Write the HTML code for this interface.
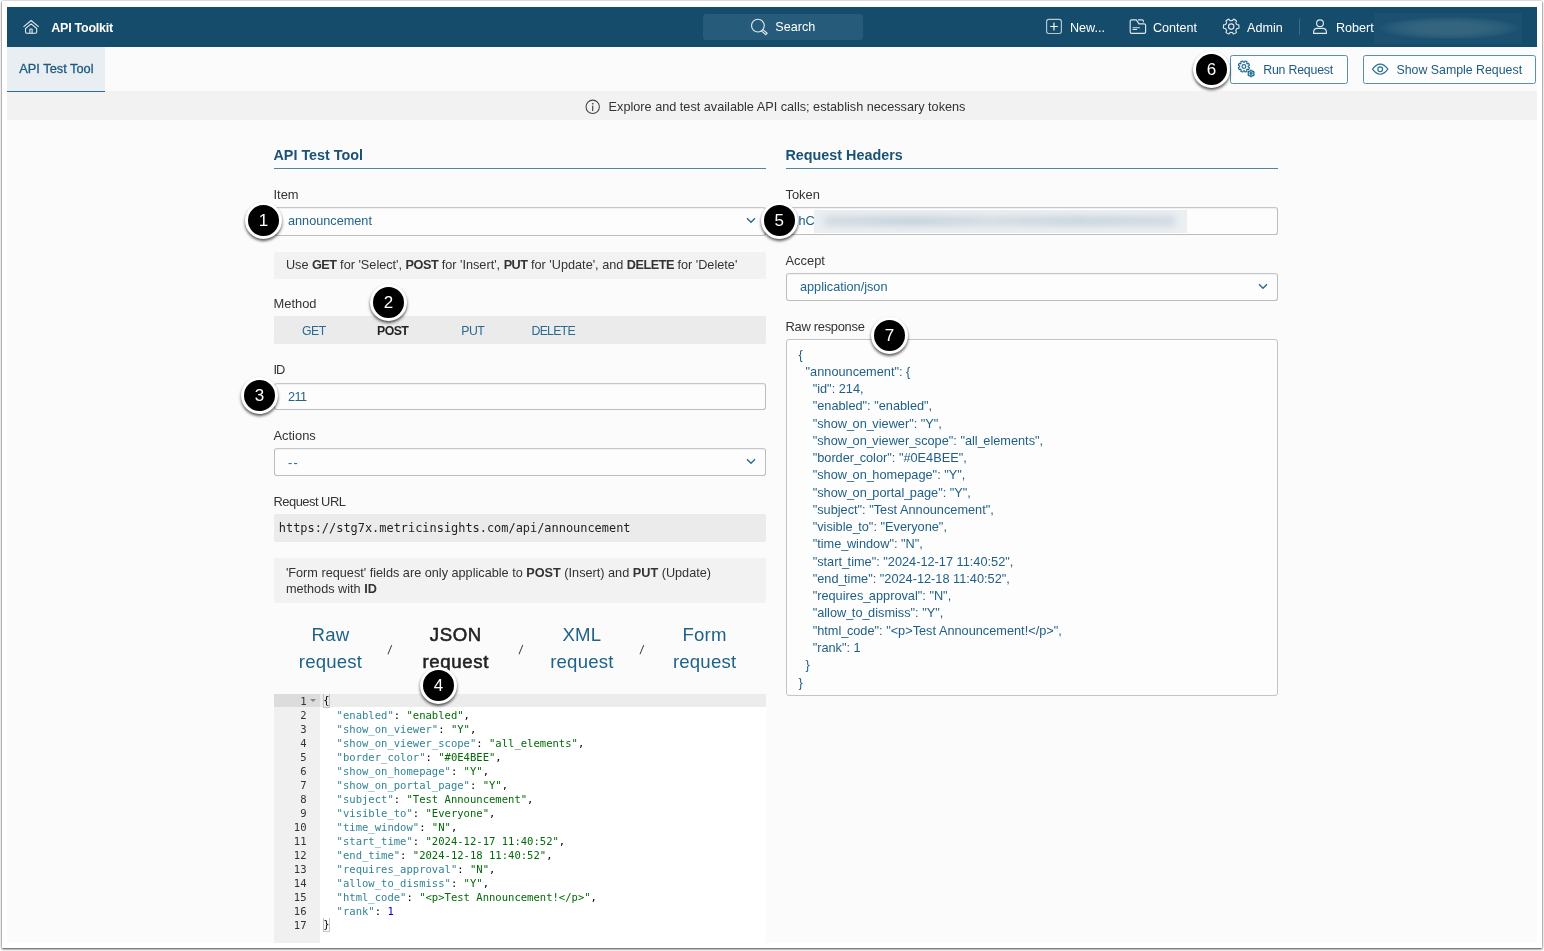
<!DOCTYPE html>
<html lang="en">
<head>
<meta charset="utf-8">
<title>API Toolkit</title>
<style>
*{box-sizing:border-box;margin:0;padding:0}
html,body{width:1544px;height:951px;overflow:hidden;background:#fff}
body{position:relative;font-family:"Liberation Sans",Arial,sans-serif;font-size:12.7px;color:#333}
.frame{position:absolute;left:2px;top:1px;width:1540px;height:947px;background:#fff;box-shadow:0 1px 2px rgba(0,0,0,.65),0 0 1px rgba(0,0,0,.4),0 1px 5px rgba(0,0,0,.12)}
.app{will-change:transform;position:absolute;left:7px;top:7px;width:1530px;height:936px;background:#fbfbfb;overflow:hidden}
.abs{position:absolute;white-space:nowrap}
.nav{position:absolute;left:0;top:0;width:1530px;height:40px;background:#154c6c;color:#fff}
.nav .t{position:absolute;top:0;height:40px;line-height:42px;font-size:12.6px;color:#fff;white-space:nowrap}
.search{position:absolute;left:696px;top:7px;width:160px;height:26px;background:#265b79;border-radius:3px}
.blur{position:absolute;left:1367px;top:6px;width:148px;height:31px;background:radial-gradient(ellipse 49% 37% at 51% 49%,#35667f 0%,#32647e 50%,#285b78 80%,rgba(27,80,112,0) 100%),#1b5070}
.tabbar{position:absolute;left:0;top:40px;width:1530px;height:44px;background:#fbfbfb}
.tab{position:absolute;left:0;top:0;width:98.4px;height:45px;z-index:2;background:#e9eef3;border-bottom:1.3px solid #2c6e91;color:#1d5a80;line-height:44.2px;padding-left:12.3px;font-size:12.8px;-webkit-text-stroke:.3px #1d5a80}
.btn{position:absolute;top:8px;height:29px;border:1.2px solid #5790ae;border-radius:2.5px;background:#fdfdfd;color:#1d5a80;font-size:12.35px;line-height:28.5px;white-space:nowrap}
.strip{position:absolute;left:0;top:84px;width:1530px;height:29px;background:#f2f2f2;color:#333;font-size:12.7px;line-height:32.6px}
.h{position:absolute;font-weight:bold;font-size:14.35px;color:#1a5276;white-space:nowrap}
.hr{position:absolute;height:1px;background:#4d86a5;width:492px}
.lbl{position:absolute;font-size:12.9px;color:#333;white-space:nowrap;line-height:16px}
.inp{position:absolute;width:492px;height:27px;border:1px solid #bcbcbc;border-top-color:#c6c6c6;border-radius:3px;background:#fdfdfd;box-shadow:inset 0 1px 0 rgba(0,0,0,.05);color:#22648a;font-size:12.7px;line-height:26px;padding-left:13.5px;white-space:nowrap}
.note{position:absolute;width:492px;background:#f2f2f2;color:#333;font-size:12.7px;padding-left:12.4px;border-radius:2px}
.note.n1 b{letter-spacing:-.5px}
.bar{position:absolute;width:492px;height:28px;background:#ebebeb;border-radius:2px}
.chev{position:absolute;right:9px;top:9px;width:10px;height:7px}
.mk{position:absolute;width:37px;height:37px;border-radius:50%;background:#000;border:3px solid #fff;box-shadow:0 2px 3px rgba(0,0,0,.65);color:#fff;font-size:17px;line-height:31px;text-align:center;z-index:10}

.m{top:0;line-height:30px;font-size:12.3px;letter-spacing:-.55px;color:#2a6a90}
.url{font-family:"DejaVu Sans Mono","Liberation Mono",monospace;font-size:11.93px;line-height:29px;color:#222;padding-left:5.3px;white-space:nowrap}
.rt{position:absolute;top:615.4px;font-size:18.6px;letter-spacing:.2px;line-height:26.4px;color:#1f6289;text-align:center;white-space:nowrap}
.rt.on{color:#222;-webkit-text-stroke:.55px #222;letter-spacing:.65px}
.sl{position:absolute;top:635.5px;font-size:12.5px;color:#333;transform:skewX(-8deg)}
.ta{position:absolute;width:492px;height:357px;border:1px solid #c4c4c4;border-radius:3px;background:#fdfdfd;padding:5.5px 0 0 12px}
.ta pre i{font-style:normal;letter-spacing:-1.5px}
.ta pre{font-family:"Liberation Sans",Arial,sans-serif;font-size:12.75px;line-height:17.265px;color:#1f5f85;tab-size:2}
.tokblur{position:absolute;left:27.5px;top:1.3px;width:373px;height:23px;background:#ebeff2;overflow:hidden;filter:blur(.7px)}
.tokblur:after{content:"";position:absolute;left:10px;right:12px;top:6.5px;height:10px;background:linear-gradient(90deg,#d2dbe2,#c6d1da 25%,#d3dce3 48%,#c9d4dc 72%,#d0dae1);filter:blur(3.5px)}

.ace{position:absolute;width:492px;height:249px;background:#fff;font-family:"DejaVu Sans Mono","Liberation Mono",monospace;font-size:10.55px;line-height:14px;overflow:hidden}
.gut{position:absolute;left:0;top:0;width:46px;height:249px;background:#f0f0f0;color:#333}
.gl{height:14px;text-align:right;padding-right:13px}
.gl.act{background:linear-gradient(#dcdcdc 0,#dcdcdc 13px,#f0f0f0 13px)}
.fold{position:absolute;left:36px;top:5px;width:0;height:0;border-left:3px solid transparent;border-right:3px solid transparent;border-top:3.5px solid #888}
.code{position:absolute;left:46px;top:0;width:446px;height:249px;color:#000}
.cl{height:14px;padding-left:4.4px;white-space:pre}
.cl.act{background:linear-gradient(#ececec 0,#ececec 13px,#fff 13px)}
.k{color:#318495}.s{color:#036a07}.n{color:#0000cd}
.br{display:inline-block;width:7.7px;height:13.5px;margin-left:-1.4px;border:1px solid #c4c4c4;border-top:0;vertical-align:top;line-height:13.5px;box-sizing:border-box;text-indent:-.3px}
.ov{position:absolute;left:-7px;top:-7px;z-index:5;pointer-events:none}
</style>
</head>
<body>
<div class="frame"></div>
<div class="app">

  <svg class="ov" viewBox="0 0 1544 951" width="1544" height="951" fill="none" stroke-linecap="round" stroke-linejoin="round">
    <!-- home -->
    <g stroke="#dde7ed" stroke-width="1.1">
      <path d="M23.5 26.9 L31.1 20.5 L38.7 26.9" stroke-linecap="butt"/>
      <path d="M25.5 28.5 L31.1 23.8 L36.7 28.5 V31.8 a1.5 1.5 0 0 1 -1.5 1.5 H27 a1.5 1.5 0 0 1 -1.5 -1.5 Z"/>
      <path d="M29.9 33.2 V29 H32.1 V33.2"/>
    </g>
    <!-- search -->
    <g stroke="#dde7ed" stroke-width="1.15">
      <circle cx="757.9" cy="25.6" r="6.4"/>
      <path d="M762.6 29.4 L767.2 33.2 L765.9 34.7 L761.3 30.9"/>
    </g>
    <!-- plus -->
    <g stroke="#dde7ed" stroke-width="1.15">
      <rect x="1046.6" y="19.3" width="14.8" height="14.2" rx="2.2" stroke="#b7c8d3"/>
      <path d="M1050.6 26.5 H1057.4 M1054 23.1 V29.9" stroke="#fff"/>
    </g>
    <!-- folder -->
    <g stroke="#dde7ed" stroke-width="1.15">
      <path d="M1131.6 19.9 H1136.3 L1139 23.9 H1144.2 a1.4 1.4 0 0 1 1.4 1.4 V31.9 a1.4 1.4 0 0 1 -1.4 1.4 H1131.6 a1.4 1.4 0 0 1 -1.4 -1.4 V21.3 a1.4 1.4 0 0 1 1.4 -1.4 Z"/>
      <path d="M1138.4 19.8 H1142 q1.4 0 1.5 1.9"/>
      <path d="M1133 27.7 H1139.4 M1133 29.5 H1136.6"/>
    </g>
    <!-- gear admin -->
    <g stroke="#dde7ed" stroke-width="1.15" ><path d="M1236.48 32.34 A7.80 7.80 0 0 1 1233.53 34.04 L1232.18 32.42 A5.90 5.90 0 0 1 1230.22 32.42 L1228.87 34.04 A7.80 7.80 0 0 1 1225.92 32.34 L1226.65 30.36 A5.90 5.90 0 0 1 1225.67 28.66 L1223.59 28.30 A7.80 7.80 0 0 1 1223.59 24.90 L1225.67 24.54 A5.90 5.90 0 0 1 1226.65 22.84 L1225.92 20.86 A7.80 7.80 0 0 1 1228.87 19.16 L1230.22 20.78 A5.90 5.90 0 0 1 1232.18 20.78 L1233.53 19.16 A7.80 7.80 0 0 1 1236.48 20.86 L1235.75 22.84 A5.90 5.90 0 0 1 1236.73 24.54 L1238.81 24.90 A7.80 7.80 0 0 1 1238.81 28.30 L1236.73 28.66 A5.90 5.90 0 0 1 1235.75 30.36 Z"/><circle cx="1231.2" cy="26.6" r="2.7"/></g>
    <!-- separator -->
    <path d="M1299.5 19 V34.6" stroke="#3f6d88" stroke-width="1"/>
    <!-- user -->
    <g stroke="#dde7ed" stroke-width="1.15">
      <circle cx="1320" cy="23.2" r="3.4"/>
      <path d="M1313.6 33.4 V32.2 q0 -3.8 3.8 -3.8 H1322.6 q3.8 0 3.8 3.8 V33.4 Z"/>
    </g>
    <!-- run gears -->
    <g stroke="#1f6a90" stroke-width="1.15" ><path d="M1249.39 67.59 A5.60 5.60 0 0 1 1248.56 69.61 L1247.25 69.20 A4.30 4.30 0 0 1 1246.60 69.85 L1247.01 71.16 A5.60 5.60 0 0 1 1244.99 71.99 L1244.36 70.77 A4.30 4.30 0 0 1 1243.44 70.77 L1242.81 71.99 A5.60 5.60 0 0 1 1240.79 71.16 L1241.20 69.85 A4.30 4.30 0 0 1 1240.55 69.20 L1239.24 69.61 A5.60 5.60 0 0 1 1238.41 67.59 L1239.63 66.96 A4.30 4.30 0 0 1 1239.63 66.04 L1238.41 65.41 A5.60 5.60 0 0 1 1239.24 63.39 L1240.55 63.80 A4.30 4.30 0 0 1 1241.20 63.15 L1240.79 61.84 A5.60 5.60 0 0 1 1242.81 61.01 L1243.44 62.23 A4.30 4.30 0 0 1 1244.36 62.23 L1244.99 61.01 A5.60 5.60 0 0 1 1247.01 61.84 L1246.60 63.15 A4.30 4.30 0 0 1 1247.25 63.80 L1248.56 63.39 A5.60 5.60 0 0 1 1249.39 65.41 L1248.17 66.04 A4.30 4.30 0 0 1 1248.17 66.96 Z"/><circle cx="1243.9" cy="66.5" r="1.9"/><path d="M1254.19 74.33 A3.20 3.20 0 0 1 1253.36 75.76 L1252.52 75.31 A2.30 2.30 0 0 1 1251.95 75.64 L1251.93 76.59 A3.20 3.20 0 0 1 1250.27 76.59 L1250.25 75.64 A2.30 2.30 0 0 1 1249.68 75.31 L1248.84 75.76 A3.20 3.20 0 0 1 1248.01 74.33 L1248.82 73.83 A2.30 2.30 0 0 1 1248.82 73.17 L1248.01 72.67 A3.20 3.20 0 0 1 1248.84 71.24 L1249.68 71.69 A2.30 2.30 0 0 1 1250.25 71.36 L1250.27 70.41 A3.20 3.20 0 0 1 1251.93 70.41 L1251.95 71.36 A2.30 2.30 0 0 1 1252.52 71.69 L1253.36 71.24 A3.20 3.20 0 0 1 1254.19 72.67 L1253.38 73.17 A2.30 2.30 0 0 1 1253.38 73.83 Z"/><circle cx="1251.1" cy="73.5" r=".9"/></g>
    <!-- eye -->
    <g stroke="#2a6e92" stroke-width="1.15">
      <path d="M1372.5 69.2 Q1376.2 64.2 1380.2 64.2 Q1384.2 64.2 1387.9 69.2 Q1384.2 74.2 1380.2 74.2 Q1376.2 74.2 1372.5 69.2 Z"/>
      <circle cx="1380.2" cy="69.3" r="2.4"/>
    </g>
    <!-- info -->
    <g stroke="#444" stroke-width="1.05">
      <circle cx="592.7" cy="106.8" r="6.7"/>
      <path d="M592.7 106 V110.6" stroke-width="1.2"/>
      <circle cx="592.7" cy="103.8" r=".35" fill="#444" stroke-width=".8"/>
    </g>
  </svg>
  <div class="nav">
    <div class="t" style="left:44.3px;font-weight:bold;font-size:12.5px;letter-spacing:-.25px">API Toolkit</div>
    <div class="search"></div>
    <div class="t" style="left:768.3px;top:-.9px">Search</div>
    <div class="t" style="left:1063px">New...</div>
    <div class="t" style="left:1146px">Content</div>
    <div class="t" style="left:1240px">Admin</div>
    <div class="t" style="left:1329px">Robert</div>
    <div class="blur"></div>
  </div>
  <div class="tabbar">
    <div class="tab">API Test Tool</div>
    <div class="btn" style="left:1223px;width:118px;padding-left:32.2px;letter-spacing:-.2px">Run Request</div>
    <div class="btn" style="left:1356px;width:173px;padding-left:32.5px">Show Sample Request</div>
  </div>
  <div class="strip"><span class="abs" style="left:601.6px">Explore and test available API calls; establish necessary tokens</span></div>

  <!-- LEFT COLUMN -->
  <div class="h" id="h1" style="left:266.5px;top:139.7px">API Test Tool</div>
  <div class="hr" style="left:266.5px;top:161px"></div>
  <div class="lbl" style="left:266.5px;top:180px">Item</div>
  <div class="inp" style="left:266.5px;top:200.3px;height:28.3px;line-height:27px">announcement<svg class="chev" viewBox="0 0 10 7"><path d="M1 1.2 L5 5.2 L9 1.2" fill="none" stroke="#2a6a90" stroke-width="1.4"/></svg></div>
  <div class="note n1" style="left:266.5px;top:244.7px;height:27px;line-height:27.6px">Use <b>GET</b> for 'Select', <b>POST</b> for 'Insert', <b>PUT</b> for 'Update', and <b>DELETE</b> for 'Delete'</div>
  <div class="lbl" style="left:266.5px;top:289px">Method</div>
  <div class="bar" style="left:266.5px;top:309px">
    <span class="abs m" style="left:28.5px">GET</span>
    <span class="abs m" style="left:103.6px;color:#222;font-weight:bold;letter-spacing:-.6px">POST</span>
    <span class="abs m" style="left:187.8px">PUT</span>
    <span class="abs m" style="left:258px;letter-spacing:-.75px">DELETE</span>
  </div>
  <div class="lbl" style="left:266.5px;top:355px;letter-spacing:-1px">ID</div>
  <div class="inp" style="left:266.5px;top:376px;letter-spacing:-.6px">211</div>
  <div class="lbl" style="left:266.5px;top:421px">Actions</div>
  <div class="inp" style="left:266.5px;top:441px;height:28px;line-height:28.4px;letter-spacing:1.2px">--<svg class="chev" viewBox="0 0 10 7"><path d="M1 1.2 L5 5.2 L9 1.2" fill="none" stroke="#2a6a90" stroke-width="1.4"/></svg></div>
  <div class="lbl" style="left:266.5px;top:487px;letter-spacing:-.5px">Request URL</div>
  <div class="bar url" style="left:266.5px;top:507px">https://stg7x.metricinsights.com/api/announcement</div>
  <div class="note" style="left:266.5px;top:551px;height:45px;line-height:16.4px;padding-top:6.6px;white-space:nowrap">'Form request' fields are only applicable to <b>POST</b> (Insert) and <b>PUT</b> (Update)<br>methods with <b>ID</b></div>

  <div class="rt" style="left:291.8px">Raw<br>request</div>
  <div class="sl" style="left:380.5px">/</div>
  <div class="rt on" style="left:415.5px">JSON<br>request</div>
  <div class="sl" style="left:511.7px">/</div>
  <div class="rt" style="left:543.2px">XML<br>request</div>
  <div class="sl" style="left:632.5px">/</div>
  <div class="rt" style="left:665.9px">Form<br>request</div>

  <!-- RIGHT COLUMN -->
  <div class="h" id="h2" style="left:778.5px;top:139.7px">Request Headers</div>
  <div class="hr" style="left:778.5px;top:161px"></div>
  <div class="lbl" style="left:778.5px;top:180px">Token</div>
  <div class="inp" style="left:778.5px;top:200.3px;height:27.7px;padding-left:12px">hC<span class="tokblur"></span></div>
  <div class="lbl" style="left:778.5px;top:246px">Accept</div>
  <div class="inp" style="left:778.5px;top:266.2px;height:27.8px">application/json<svg class="chev" viewBox="0 0 10 7"><path d="M1 1.2 L5 5.2 L9 1.2" fill="none" stroke="#2a6a90" stroke-width="1.4"/></svg></div>
  <div class="lbl" style="left:778.5px;top:312px;letter-spacing:-.28px">Raw response</div>
  <div class="ta" style="left:778.5px;top:332px"><pre>{
  "announcement": {
    "id": 214,
    "enabled": "enabled",
    "show<i>_</i>on<i>_</i>viewer": "Y",
    "show<i>_</i>on<i>_</i>viewer<i>_</i>scope": "all<i>_</i>elements",
    "border<i>_</i>color": "#0E4BEE",
    "show<i>_</i>on<i>_</i>homepage": "Y",
    "show<i>_</i>on<i>_</i>portal<i>_</i>page": "Y",
    "subject": "Test Announcement",
    "visible<i>_</i>to": "Everyone",
    "time<i>_</i>window": "N",
    "start<i>_</i>time": "2024-12-17 11:40:52",
    "end<i>_</i>time": "2024-12-18 11:40:52",
    "requires<i>_</i>approval": "N",
    "allow<i>_</i>to<i>_</i>dismiss": "Y",
    "html<i>_</i>code": "&lt;p&gt;Test Announcement!&lt;/p&gt;",
    "rank": 1
  }
}</pre></div>

  <!-- CODE EDITOR -->
  <div class="ace" style="left:266.5px;top:687px">
    <div class="gut"><div class="gl act">1</div><div class="gl">2</div><div class="gl">3</div><div class="gl">4</div><div class="gl">5</div><div class="gl">6</div><div class="gl">7</div><div class="gl">8</div><div class="gl">9</div><div class="gl">10</div><div class="gl">11</div><div class="gl">12</div><div class="gl">13</div><div class="gl">14</div><div class="gl">15</div><div class="gl">16</div><div class="gl">17</div><i class="fold"></i></div>
    <div class="code"><div class="cl act"><span class="br">{</span></div><div class="cl">  <span class="k">"enabled"</span>: <span class="s">"enabled"</span>,</div><div class="cl">  <span class="k">"show_on_viewer"</span>: <span class="s">"Y"</span>,</div><div class="cl">  <span class="k">"show_on_viewer_scope"</span>: <span class="s">"all_elements"</span>,</div><div class="cl">  <span class="k">"border_color"</span>: <span class="s">"#0E4BEE"</span>,</div><div class="cl">  <span class="k">"show_on_homepage"</span>: <span class="s">"Y"</span>,</div><div class="cl">  <span class="k">"show_on_portal_page"</span>: <span class="s">"Y"</span>,</div><div class="cl">  <span class="k">"subject"</span>: <span class="s">"Test Announcement"</span>,</div><div class="cl">  <span class="k">"visible_to"</span>: <span class="s">"Everyone"</span>,</div><div class="cl">  <span class="k">"time_window"</span>: <span class="s">"N"</span>,</div><div class="cl">  <span class="k">"start_time"</span>: <span class="s">"2024-12-17 11:40:52"</span>,</div><div class="cl">  <span class="k">"end_time"</span>: <span class="s">"2024-12-18 11:40:52"</span>,</div><div class="cl">  <span class="k">"requires_approval"</span>: <span class="s">"N"</span>,</div><div class="cl">  <span class="k">"allow_to_dismiss"</span>: <span class="s">"Y"</span>,</div><div class="cl">  <span class="k">"html_code"</span>: <span class="s">"&lt;p&gt;Test Announcement!&lt;/p&gt;"</span>,</div><div class="cl">  <span class="k">"rank"</span>: <span class="n">1</span></div><div class="cl"><span class="br">}</span></div></div>
  </div>
  <!-- MARKERS -->
  <div class="mk" style="left:238px;top:195px">1</div>
  <div class="mk" style="left:363px;top:277px">2</div>
  <div class="mk" style="left:234px;top:370px">3</div>
  <div class="mk" style="left:413px;top:660px">4</div>
  <div class="mk" style="left:753.8px;top:194.8px">5</div>
  <div class="mk" style="left:1186px;top:44px">6</div>
  <div class="mk" style="left:864px;top:310px">7</div>
</div>
</body>
</html>
